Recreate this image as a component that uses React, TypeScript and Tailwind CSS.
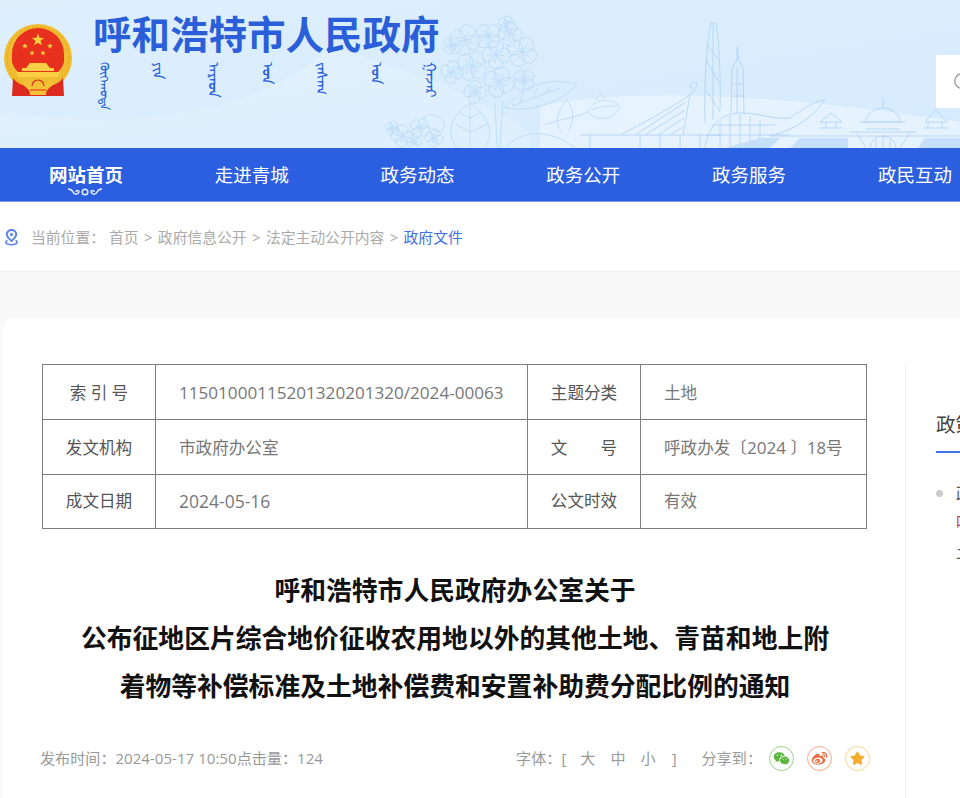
import { Search, Star } from "lucide-react";
import { RiWechatFill, RiWeiboFill } from "react-icons/ri";

const cjk = { fontFamily: '"Open Sans", "Noto Sans CJK SC", sans-serif' };

const navItems = ["网站首页", "走进青城", "政务动态", "政务公开", "政务服务", "政民互动"];
const mongolWords = ["ᠬᠥᠬᠡᠬᠣᠲᠠ", "ᠶᠢᠨ", "ᠠᠷᠠᠳ", "ᠤᠨ", "ᠵᠠᠰᠠᠭ", "ᠤᠨ", "ᠭᠠᠵᠠᠷ"];

// florets of the hydrangea in the banner: cx, cy, size, rotation
const florets = [
  [465, 40, 15, 20], [488, 36, 13, 50], [510, 34, 12, 10], [522, 52, 15, 35], [496, 55, 14, 5],
  [472, 66, 15, 40], [452, 72, 11, 15], [499, 82, 15, 25], [524, 80, 11, 50], [475, 92, 11, 10],
  [452, 46, 9, 45], [506, 24, 8, 30],
];
const smallFlorets = [
  [402, 136, 11, 10], [420, 128, 10, 40], [434, 138, 9, 20], [392, 128, 7, 35], [414, 142, 8, 0],
];

function floret(s: number) {
  const petal = `M0 0 C${-s * 0.75} ${-s * 0.25} ${-s * 0.7} ${-s} ${-s * 0.1} ${-s} C${s * 0.6} ${-s * 1.05} ${s * 0.7} ${-s * 0.25} 0 0Z`;
  return [0, 90, 180, 270].map((r) => (
    <path key={r} d={`${petal} M0 ${-s * 0.25} L0 ${-s * 0.6}`} transform={`rotate(${r})`} />
  ));
}

function Banner() {
  return (
    <svg className="absolute inset-0 h-[148px] w-[960px]" viewBox="0 0 960 148" fill="none" aria-hidden="true">
      <path d="M330 48 C400 66 470 92 530 132 L530 148 L0 148 L0 112 C120 128 250 120 330 48Z" fill="#e6f3fd" opacity="0.45" />
      <path d="M540 106 C640 86 780 95 960 122 L960 148 L540 148Z" fill="#eaf5fe" opacity="0.8" />
      <g stroke="#bddbf7" strokeWidth="0.9">
        {florets.map(([x, y, s, r], i) => (
          <g key={i} transform={`translate(${x} ${y}) rotate(${r})`}>{floret(s)}</g>
        ))}
        {smallFlorets.map(([x, y, s, r], i) => (
          <g key={i} transform={`translate(${x} ${y}) rotate(${r})`}>{floret(s)}</g>
        ))}
        <path d="M495 102 L497 148 M503 100 L500 148" />
        <path d="M505 108 C525 82 550 78 577 84 C560 104 530 112 505 108Z M512 106 L560 88 M520 102 L524 92 M532 98 L538 88 M545 94 L550 86" />
        <path d="M470 103 C450 115 445 135 458 148 M470 103 C492 118 494 138 484 148 M470 104 L470 148 M470 118 L458 112 M470 118 L482 112 M470 132 L455 124 M470 132 L488 124" />
        <path d="M567 100 C555 112 556 126 562 132 M567 100 C575 110 574 122 568 132" />
        <path d="M505 148 C520 130 550 128 575 148 M545 125 C555 120 575 118 588 112" />
        <path d="M588 112 C592 100 608 96 620 106 C616 118 600 124 588 112Z M596 100 L600 94 L606 98 M592 110 C600 106 610 106 618 106" />
        <path d="M424 118 C428 112 438 114 444 122 C446 130 440 134 434 130 C428 128 424 124 424 118Z" />
      </g>
      <g stroke="#b2d4f6" strokeWidth="0.9">
        <path d="M705 123 C704 80 707 40 711 23 L716 23 C719 40 721 80 720 110 M706 60 L720 84 M706 44 L719 60 M706 90 L720 112 M713 23 L713 120" />
        <path d="M731 113 L732 68 L737 60 L737 47 L739 60 L743 68 L744 113 M737 68 L737 113 M733 84 L743 84 M733 96 L743 96" />
        <path d="M620 135 C650 120 675 105 690 95 L683 135 M690 95 C700 85 698 80 692 83 C688 85 690 89 693 88" />
        <path d="M635 135 L686 102 M645 135 L685 110 M658 135 L684 118 M670 135 L683 127" />
        <path d="M580 135 L722 135 M590 135 L590 148 M640 135 L640 148 M660 135 L660 148 M680 135 L680 148 M700 135 L700 148" />
        <path d="M705 148 C708 125 722 113 740 113 C762 113 772 120 790 118 C802 110 815 100 825 100 C815 115 795 130 770 136 L960 136" />
        <path d="M720 148 L720 122 M730 148 L730 116 M740 148 L740 114 M750 148 L750 116 M760 148 L760 120 M705 135 L790 135 M712 125 L775 125" />
        <path d="M820 122 L842 122 L831 113 Z M826 122 L826 128 M836 122 L836 128 M820 128 L842 128" />
        <path d="M865 122 C868 112 876 108 883 108 C890 108 898 112 901 122 Z M883 108 L883 98 M860 122 L906 122 M866 129 L900 129 M850 132 L916 132 M856 132 L866 148 M910 132 L900 148" />
        <path d="M925 122 L947 122 L936 110 Z M928 122 L928 128 M942 122 L942 128 M924 128 L948 128" />
        <path d="M870 148 C872 132 894 132 896 148 M876 148 L876 138 M883 148 L883 135 M890 148 L890 138" />
      </g>
      <g fill="#c5dff8">
        <path d="M725 148 L760 138 L780 138 L770 148Z M790 148 L800 138 L848 138 L848 148Z M918 148 L925 138 L960 138 L960 148Z" />
      </g>
    </svg>
  );
}

function Emblem() {
  const stars = [[38, 40, 6.5], [25, 46, 3], [50, 46, 3], [32, 53, 2.8], [43, 53, 2.8]];
  return (
    <svg className="mt-[20px] h-[84px] w-[76px] shrink-0" viewBox="0 20 76 84" aria-hidden="true">
      <circle cx="38" cy="58" r="34" fill="#f0bc32" />
      <circle cx="38" cy="58" r="31" fill="none" stroke="#e3a11e" strokeWidth="1" strokeDasharray="2 2" />
      <path d="M12 54 A26 26 0 0 1 64 54 L64 62 C62 70 56 74 50 77 L26 77 C20 74 14 70 12 62Z" fill="#e8301f" />
      {stars.map(([x, y, s], i) => (
        <polygon
          key={i}
          fill="#f8d13c"
          points={Array.from({ length: 10 }, (_, k) => {
            const a = (Math.PI / 5) * k - Math.PI / 2;
            const d = k % 2 ? s * 0.42 : s;
            return `${x + d * Math.cos(a)},${y + d * Math.sin(a)}`;
          }).join(" ")}
        />
      ))}
      <path d="M30 63 L46 63 L50 68 L54 68 L54 71 L22 71 L22 68 L26 68Z M16 72 L60 72 L58 77 L18 77Z" fill="#f8cf45" />
      <path d="M13 78 C18 85 28 88 38 86 C48 88 58 85 63 78 L64 96 L12 96Z" fill="#dd2a20" />
      <path d="M22 83 C26 79 30 85 34 83 C36 81 40 81 42 83 C46 85 50 79 54 83 C50 89 46 88 46 95 L30 95 C30 88 26 89 22 83Z" fill="#f3c136" />
      <path d="M30 90 L46 90 M32 86 A3 3 0 0 1 44 86" fill="none" stroke="#dd2a20" strokeWidth="1.2" />
    </svg>
  );
}

function ShareIcon({ className, children }: { className: string; children: React.ReactNode }) {
  return <span className={`flex h-[25px] w-[25px] items-center justify-center rounded-full border ${className}`}>{children}</span>;
}

export default function App() {
  const thCls = "border border-[#7d7d7d] text-center font-normal text-[#555]";
  const tdCls = "border border-[#7d7d7d] pl-[23px] text-left font-normal text-[#777]";

  return (
    <div className="h-[798px] w-[960px] overflow-hidden bg-white text-[#555]" style={cjk}>
      {/* Banner */}
      <header className="relative flex h-[148px] overflow-hidden bg-gradient-to-br from-[#dfeffc] via-[#d9edfd] to-[#d6ebfe]">
        <Banner />
        <div className="relative flex w-full">
          <Emblem />
          <div className="ml-[17px] pt-[11px]">
            <h1 className="text-[38.5px] leading-[46px] font-bold whitespace-nowrap text-[#2b5fd9]">呼和浩特市人民政府</h1>
            <div className="mt-[5px] flex w-[345px] justify-between pl-[4px] text-[#2b5fd9]">
              {mongolWords.map((w, i) => (
                <span key={i} className={`leading-[15px] [writing-mode:vertical-lr] ${i === 0 ? "text-[12px]" : "text-[15px]"}`}>{w}</span>
              ))}
            </div>
          </div>
          <div className="mt-[55px] ml-auto flex h-[53px] w-[24px] items-center bg-white pl-[16px] text-[#999]">
            <Search className="h-[22px] w-[22px] shrink-0" strokeWidth={1.5} />
          </div>
        </div>
      </header>

      {/* Nav */}
      <nav className="flex h-[54px] border-b border-[#7f9fee] bg-[#2b5fe0] pl-[3px]">
        {navItems.map((item, i) => (
          <a key={item} className={`relative flex w-[165.8px] shrink-0 items-center justify-center pt-px text-[18.5px] leading-[54px] whitespace-nowrap text-white ${i === 0 ? "font-bold" : ""}`}>
            {item}
            {i === 0 && (
              <svg className="absolute top-[40px] left-[64px] h-[8px] w-[36px]" viewBox="0 0 36 8" fill="none" stroke="#e4ebfb" strokeWidth="1.5" aria-hidden="true">
                <path d="M1 1 C3 1 5 2 6 4 C7 7 11 7 12 4 C12 2 9 2 9 4 M35 1 C33 1 31 2 30 4 C29 7 25 7 24 4 C24 2 27 2 27 4" />
                <circle cx="18" cy="4" r="2.8" />
              </svg>
            )}
          </a>
        ))}
      </nav>

      {/* Breadcrumb */}
      <div className="flex h-[70px] items-center border-b border-[#f0f0f0] pt-px pl-[4px] text-[14.8px] text-[#aaa]">
        <svg className="h-[17px] w-[15px] shrink-0" viewBox="0 0 15 17" fill="none" stroke="#5f86e6" strokeWidth="2" aria-hidden="true">
          <path d="M7.5 12 C4 9 2.8 7.4 2.8 5.6 A4.7 4.7 0 0 1 12.2 5.6 C12.2 7.4 11 9 7.5 12Z" />
          <circle cx="7.5" cy="5.6" r="1.2" fill="#5f86e6" strokeWidth="1" />
          <path d="M3.5 11.5 C1 12.5 0.8 15.5 7.5 15.7 C14.2 15.5 14 12.5 11.5 11.5" strokeWidth="1.6" />
        </svg>
        <span className="ml-[12px]">当前位置：</span>
        <span className="ml-[4px]">首页</span>
        <span className="mx-[5.4px]">&gt;</span>
        <span>政府信息公开</span>
        <span className="mx-[5.4px]">&gt;</span>
        <span>法定主动公开内容</span>
        <span className="mx-[5.4px]">&gt;</span>
        <span className="text-[#3f72e4]">政府文件</span>
      </div>

      {/* Content */}
      <div className="h-[526px] bg-[#f9f9f9] pt-[46px] pl-[3px]">
        <div className="flex h-full w-[1300px] rounded-t-xl bg-white pt-[46px] pl-[37px]">
          <main className="w-[830px] shrink-0">
            <table className="mx-[2px] w-[825px] table-fixed border-collapse text-[16.6px]">
              <colgroup>
                <col className="w-[113px]" />
                <col className="w-[372px]" />
                <col className="w-[113px]" />
                <col />
              </colgroup>
              <tbody>
                <tr className="h-[55px] [&>*]:pt-[2px]">
                  <th className={thCls}>索 引 号</th>
                  <td className={`${tdCls} text-[17.1px]`}>115010001152013<wbr />20201320/2024-00063</td>
                  <th className={thCls}>主题分类</th>
                  <td className={tdCls}>土地</td>
                </tr>
                <tr className="h-[55px] [&>*]:pt-[2px]">
                  <th className={thCls}>发文机构</th>
                  <td className={tdCls}>市政府办公室</td>
                  <th className={thCls}>文　　号</th>
                  <td className={tdCls}>呼政办发〔<span className="text-[17.1px]">2024</span> 〕18号</td>
                </tr>
                <tr className="h-[54px]">
                  <th className={thCls}>成文日期</th>
                  <td className={`${tdCls} text-[17.5px]`}>2024-05-16</td>
                  <th className={thCls}>公文时效</th>
                  <td className={tdCls}>有效</td>
                </tr>
              </tbody>
            </table>

            <h2 className="mt-[37px] text-center text-[25.8px] leading-[48px] font-bold text-[#111]">
              呼和浩特市人民政府办公室关于
              <br />
              公布征地区片综合地价征收农用地以外的其他土地、青苗和地上附
              <br />
              着物等补偿标准及土地补偿费和安置补助费分配比例的通知
            </h2>

            <div className="mt-[19px] flex h-[70px] items-center border-b border-dashed border-[#e5e5e5] pb-[11px] text-[15.1px] text-[#999]">
              <span>发布时间：2024-05-17 10:50点击量：124</span>
              <span className="ml-auto">字体：[</span>
              <span className="ml-[14px]">大</span>
              <span className="ml-[15px]">中</span>
              <span className="ml-[15px]">小</span>
              <span className="ml-[16px]">]</span>
              <span className="ml-[25px]">分享到：</span>
              <div className="ml-[7px] flex gap-[13px]">
                <ShareIcon className="border-[#9ad487] text-[#5cb53e]"><RiWechatFill className="h-[17px] w-[17px]" /></ShareIcon>
                <ShareIcon className="border-[#f7a88d] text-[#ee6a3c]"><RiWeiboFill className="h-[17px] w-[17px]" /></ShareIcon>
                <ShareIcon className="border-[#fbd68c] text-[#f5ae2c]"><Star className="h-[15px] w-[15px]" fill="currentColor" /></ShareIcon>
              </div>
            </div>
          </main>

          {/* Sidebar cut off by the window */}
          <aside className="ml-[35px] w-[300px] shrink-0 border-l border-[#f0f0f0] pl-[30px]">
            <div className="mt-[46px] border-b-2 border-[#3f72e4] pb-[12px] text-[19.5px] leading-[29px] text-[#444]">政策解读</div>
            <div className="mt-[26px] flex items-start gap-[13px] text-[16.5px] leading-[29px]">
              <span className="mt-[11px] h-[7px] w-[7px] shrink-0 rounded-full bg-[#ccc]" />
              <div>
                <p className="text-[#555]">政府文件解读</p>
                <p className="text-[#b44]">呼和浩特市</p>
                <p className="text-[#555]">土地补偿</p>
              </div>
            </div>
          </aside>
        </div>
      </div>
    </div>
  );
}
